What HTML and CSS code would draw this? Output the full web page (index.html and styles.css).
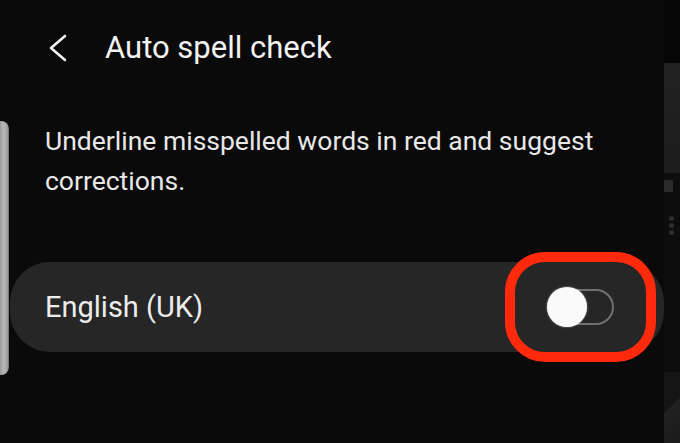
FILE: index.html
```html
<!DOCTYPE html>
<html lang="en">
<head>
  <meta charset="UTF-8" />
  <meta name="viewport" content="width=device-width, initial-scale=1.0" />
  <title>Auto spell check</title>
  <link rel="stylesheet" href="styles.css">
</head>
<body>
  <div class="screen">
    <div class="edge-left">
      <div class="edge-handle"></div>
    </div>

    <main class="content">
      <header class="topbar">
        <button class="back-btn" aria-label="Back">
          <svg width="20" height="30" viewBox="0 0 20 30">
            <polyline points="17,3 3,15 17,27" fill="none" stroke="#f2f2f2" stroke-width="2.6" stroke-linecap="round" stroke-linejoin="round"/>
          </svg>
        </button>
        <h1>Auto spell check</h1>
      </header>

      <p class="description">Underline misspelled words in red and suggest corrections.</p>

      <div class="setting-row">
        <span class="setting-label">English (UK)</span>
        <div class="highlight">
          <div class="switch">
            <div class="knob"></div>
          </div>
        </div>
      </div>
    </main>

    <div class="edge-right">
      <div class="strip-top"></div>
      <div class="strip-panel"></div>
      <div class="strip-square"></div>
      <div class="strip-dots">
        <span></span>
        <span></span>
        <span></span>
      </div>
      <div class="strip-gap"></div>
      <div class="strip-bottom"></div>
    </div>
  </div>
</body>
</html>
```

FILE: styles.css
```css
body {
  margin: 0;
  padding: 0;
  background-color: #0a0a0a;
  color: #eeeeee;
  font-family: Roboto, 'Noto Sans', sans-serif;
}
.screen {
  display: grid;
  grid-template-columns: 9px 1fr 16px;
  width: 680px;
  height: 443px;
  overflow: hidden;
}
.edge-left {
  display: flex;
  flex-direction: column;
}
.edge-handle {
  margin-top: 121px;
  height: 254px;
  background: linear-gradient(90deg, #9a9a9a, #b8b8b8 40%, #a4a4a4 80%, #6a6a6a);
  border-radius: 0 8px 8px 0;
}
.content {
  display: flex;
  flex-direction: column;
}
.topbar {
  display: flex;
  align-items: center;
  height: 96px;
  padding-left: 39px;
}
.back-btn {
  background: none;
  border: none;
  padding: 0;
  margin-right: 37px;
  display: flex;
}
.topbar h1 {
  margin: 0;
  font-size: 31px;
  font-weight: 400;
  color: #f2f2f2;
  line-height: 40px;
}
.description {
  margin: 25px 0 0;
  padding: 0 50px 0 36px;
  font-size: 26.5px;
  line-height: 40px;
  color: #e8e8e8;
}
.setting-row {
  display: flex;
  align-items: center;
  margin-top: 61px;
  height: 90px;
  margin-left: 1px;
  background-color: #262626;
  border-radius: 40px;
  padding-left: 35px;
}
.setting-label {
  font-size: 29px;
  color: #ececec;
}
.highlight {
  display: flex;
  align-items: center;
  justify-content: center;
  margin: -10px 8px -9px auto;
  width: 131px;
  height: 90px;
  border: 10px solid #ff2a0c;
  border-radius: 40px;
  background-color: #262626;
}
.switch {
  position: relative;
  width: 62px;
  height: 32px;
  border: 2px solid #707070;
  border-radius: 18px;
}
.knob {
  position: absolute;
  left: -3px;
  top: -4px;
  width: 40px;
  height: 40px;
  border-radius: 50%;
  background-color: #fafafa;
  box-shadow: 0 0 2px rgba(255, 255, 255, 0.6);
}
.edge-right {
  display: flex;
  flex-direction: column;
  background-color: #0d0d0d;
}
.strip-top {
  height: 63px;
  background-color: #060606;
}
.strip-panel {
  height: 110px;
  background: linear-gradient(180deg, #222222, #1c1c1c);
}
.strip-square {
  width: 9px;
  height: 12px;
  margin-top: 7px;
  background-color: #2a2a2a;
}
.strip-dots {
  display: flex;
  flex-direction: column;
  gap: 2px;
  margin: 24px 0 0 5px;
}
.strip-dots span {
  width: 5px;
  height: 5px;
  border-radius: 50%;
  background-color: #2e2e2e;
}
.strip-gap {
  flex: 1;
}
.strip-bottom {
  height: 71px;
  background: linear-gradient(135deg, #151515 45%, #222222 50%, #1a1a1a);
}
```
